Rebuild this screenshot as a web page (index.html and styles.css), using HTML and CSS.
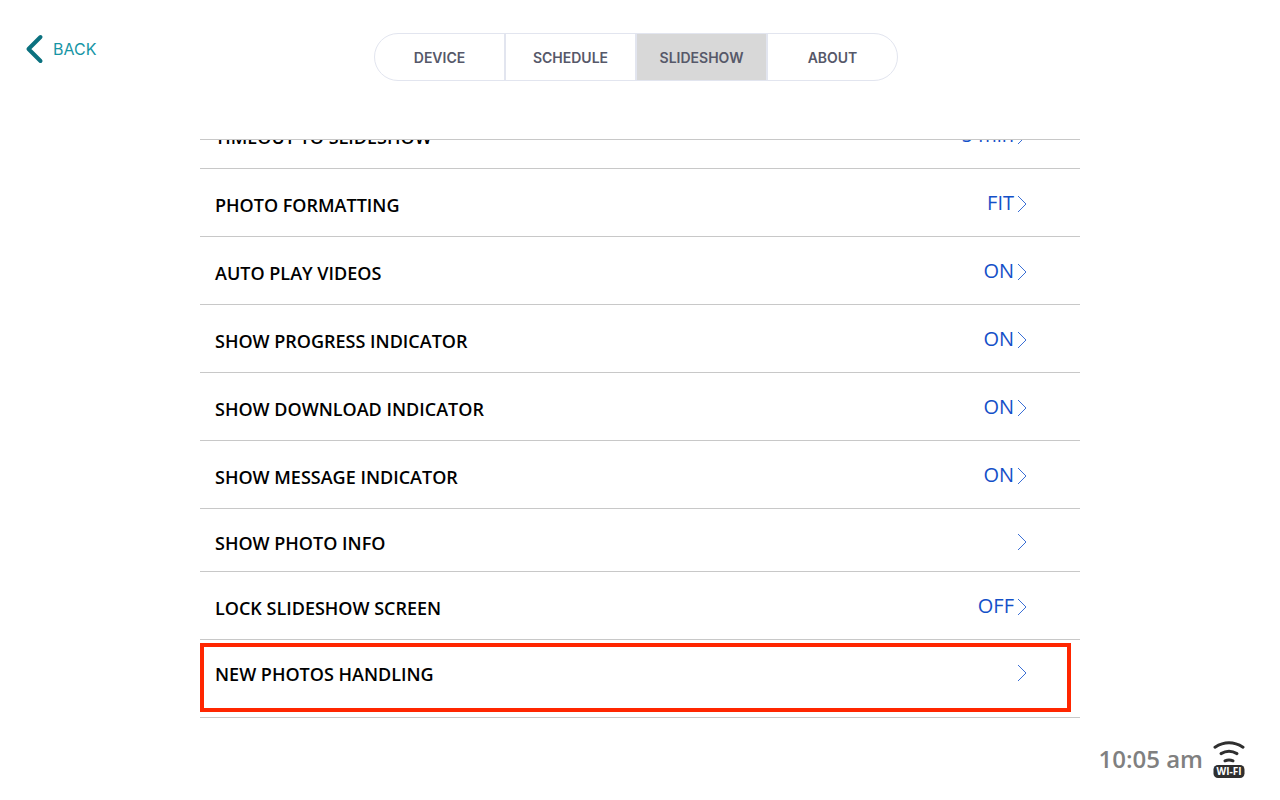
FILE: index.html
```html
<!DOCTYPE html>
<html lang="en">
<head>
  <meta charset="UTF-8">
  <meta name="viewport" content="width=device-width, initial-scale=1">
  <title>Slideshow settings</title>
  <link rel="stylesheet" href="styles.css">
</head>
<body>

<svg class="sprite" aria-hidden="true">
  <symbol id="chevron" viewBox="0 0 10 18">
    <path d="M1 1 L9 9 L1 17" fill="none" stroke="currentColor" stroke-width="1"/>
  </symbol>
</svg>

<header class="topbar">
  <a class="back" href="#">
    <svg class="back-icon" viewBox="0 0 18 30" aria-hidden="true">
      <path d="M15 3 L3 15 L15 27" fill="none" stroke="#0b717f" stroke-width="4" stroke-linecap="round" stroke-linejoin="round"/>
    </svg>
    BACK
  </a>
  <nav class="tabs">
    <button class="tab">DEVICE</button>
    <button class="tab">SCHEDULE</button>
    <button class="tab active" aria-current="page">SLIDESHOW</button>
    <button class="tab">ABOUT</button>
  </nav>
</header>

<main class="settings">
  <ul class="list">
    <li class="item"><button class="row"><span class="label">TIMEOUT TO SLIDESHOW</span><span class="value">5 min</span><svg class="chevron"><use href="#chevron"/></svg></button></li>
    <li class="item"><button class="row"><span class="label">PHOTO FORMATTING</span><span class="value">FIT</span><svg class="chevron"><use href="#chevron"/></svg></button></li>
    <li class="item"><button class="row"><span class="label">AUTO PLAY VIDEOS</span><span class="value">ON</span><svg class="chevron"><use href="#chevron"/></svg></button></li>
    <li class="item"><button class="row"><span class="label">SHOW PROGRESS INDICATOR</span><span class="value">ON</span><svg class="chevron"><use href="#chevron"/></svg></button></li>
    <li class="item"><button class="row"><span class="label">SHOW DOWNLOAD INDICATOR</span><span class="value">ON</span><svg class="chevron"><use href="#chevron"/></svg></button></li>
    <li class="item"><button class="row"><span class="label">SHOW MESSAGE INDICATOR</span><span class="value">ON</span><svg class="chevron"><use href="#chevron"/></svg></button></li>
    <li class="item"><button class="row short"><span class="label">SHOW PHOTO INFO</span><svg class="chevron"><use href="#chevron"/></svg></button></li>
    <li class="item"><button class="row"><span class="label">LOCK SLIDESHOW SCREEN</span><span class="value">OFF</span><svg class="chevron"><use href="#chevron"/></svg></button></li>
    <li class="item marked"><button class="row highlight"><span class="label">NEW PHOTOS HANDLING</span><svg class="chevron"><use href="#chevron"/></svg></button></li>
  </ul>
</main>

<footer class="statusbar">
  <time class="clock">10:05 am</time>
  <svg class="wifi" viewBox="0 0 32 38" role="img" aria-label="Wi-Fi">
    <g fill="none" stroke="#2f2f2f" stroke-width="3" stroke-linecap="round">
      <path d="M2 6.2 Q16 -2.6 30 6.2"/>
      <path d="M8 12.6 Q16 8 24 12.6"/>
      <path d="M12 19.8 Q16 18 20 19.8"/>
    </g>
    <rect x="0.5" y="24" width="31" height="13" rx="4.5" fill="#2f2f2f"/>
    <text class="wifi-text" x="16" y="34" text-anchor="middle">WI-FI</text>
  </svg>
</footer>

</body>
</html>
```
FILE: styles.css
```css
* { box-sizing: border-box; }
body { margin: 0; height: 100vh; display: flex; flex-direction: column; background-color: #fff; font-family: "Open Sans", sans-serif; }
button { margin: 0; padding: 0; border: none; background: none; font-family: inherit; cursor: pointer; }
.sprite { display: none; }

/* top bar */
.topbar { flex: none; display: grid; grid-template-columns: 1fr auto 1fr; align-items: start; padding: 33px 33px 58px 25px; }
.back { display: flex; align-items: center; gap: 9px; justify-self: start; height: 32px; font-family: Inter, sans-serif; font-size: 16px; color: #1795a5; text-decoration: none; }
.back-icon { width: 19px; height: 30px; }
.tabs { display: flex; width: 524px; height: 48px; border: 1px solid #e2e5ef; border-radius: 24px; overflow: hidden; }
.tab { flex: 1; border-right: 2px solid #e2e5ef; font-family: Inter, sans-serif; font-size: 14px; font-weight: 600; color: #565869; }
.tab:last-child { border-right: none; }
.tab.active { background-color: #d8d8d8; }

/* settings list, scrolled to the end */
.settings { flex: 1; min-height: 0; width: 100%; max-width: 880px; margin: 0 auto; }
.list { display: flex; flex-direction: column; justify-content: flex-end; height: 100%; margin: 0; padding: 0; list-style: none; border-top: 1px solid #c8c8c8; overflow: hidden; }
.item { flex: none; border-bottom: 1px solid #c8c8c8; }
.row { display: flex; align-items: center; width: 100%; height: 67px; padding: 0 53px 0 15px; text-align: left; color: #000; }
.row.short { height: 62px; }
.label { flex: 1; padding-top: 5px; font-size: 18px; font-weight: 600; }
.value { margin-right: 3px; font-size: 20px; color: #1450c8; }
.chevron { width: 10px; height: 18px; margin-top: 3px; color: #3a6fd6; }
.marked { padding: 3px 9px 5px 0; }
.row.highlight { height: 69px; padding: 0 40px 13px 11px; border: 4px solid #ff2600; }

/* status bar */
.statusbar { flex: none; display: flex; align-items: center; justify-content: flex-end; gap: 10px; height: 82px; padding-right: 35px; }
.clock { padding-bottom: 2px; font-size: 24px; font-weight: 600; color: #808080; }
.wifi { width: 32px; height: 38px; margin-top: 2px; }
.wifi-text { font-size: 10px; font-weight: 700; fill: #fff; }
```
